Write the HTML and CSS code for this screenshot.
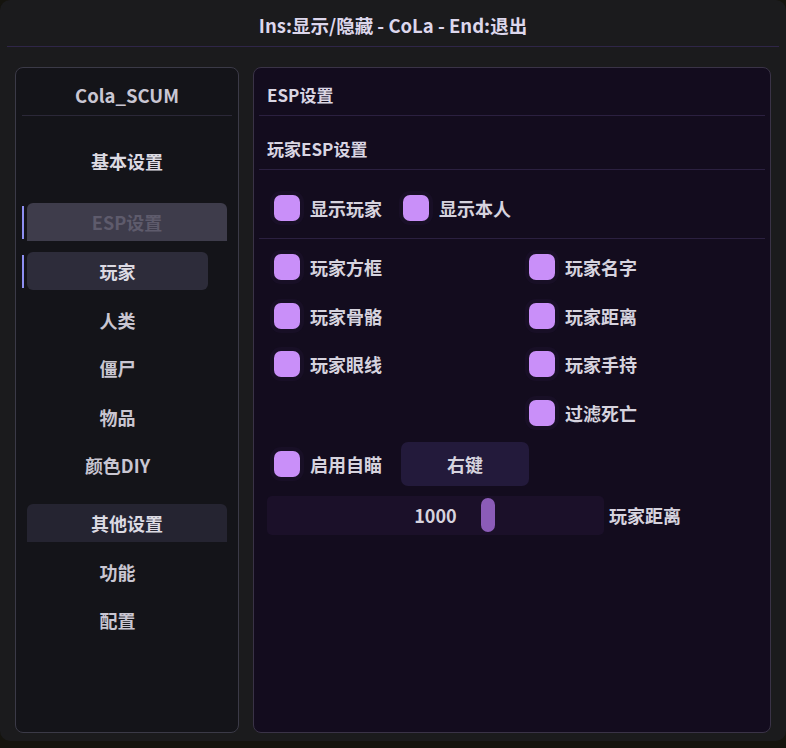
FILE: index.html
```html
<!DOCTYPE html>
<html lang="zh-CN">
<head>
    <meta charset="UTF-8">
    <meta name="viewport" content="width=device-width, initial-scale=1.0">
    <title>CoLa</title>
    <link rel="stylesheet" href="styles.css">
</head>
<body>
<div class="window">
    <div class="titlebar">Ins:显示/隐藏 - CoLa - End:退出</div>

    <div class="main">
        <div class="sidebar">
            <div class="side-title">Cola_SCUM</div>
            <div class="nav">
                <div class="nav-head">基本设置</div>
                <div class="nav-head active-group marked">ESP设置</div>
                <div class="nav-sub selected marked">玩家</div>
                <div class="nav-sub">人类</div>
                <div class="nav-sub">僵尸</div>
                <div class="nav-sub">物品</div>
                <div class="nav-sub">颜色DIY</div>
                <div class="nav-head group">其他设置</div>
                <div class="nav-sub">功能</div>
                <div class="nav-sub">配置</div>
            </div>
        </div>

        <div class="content">
            <div class="sec-title">ESP设置</div>
            <div class="sub-title">玩家ESP设置</div>

            <div class="top-row">
                <label class="check"><span class="box"></span>显示玩家</label>
                <label class="check"><span class="box"></span>显示本人</label>
            </div>

            <div class="options">
                <label class="check"><span class="box"></span>玩家方框</label>
                <label class="check"><span class="box"></span>玩家名字</label>
                <label class="check"><span class="box"></span>玩家骨骼</label>
                <label class="check"><span class="box"></span>玩家距离</label>
                <label class="check"><span class="box"></span>玩家眼线</label>
                <label class="check"><span class="box"></span>玩家手持</label>
                <div></div>
                <label class="check"><span class="box"></span>过滤死亡</label>
                <div class="aim-row">
                    <label class="check"><span class="box"></span>启用自瞄</label>
                    <button class="key-btn">右键</button>
                </div>
            </div>

            <div class="slider-row">
                <div class="slider">
                    <span class="slider-value">1000</span>
                    <span class="slider-grab"></span>
                </div>
                <span class="slider-label">玩家距离</span>
            </div>
        </div>
    </div>
</div>
</body>
</html>
```

FILE: styles.css
```css
body {
    margin: 0;
    background: #15140e;
    font-family: "Noto Sans CJK SC", "Noto Sans", sans-serif;
    font-weight: 700;
    font-size: 18px;
    color: #d6d3de;
}

.window {
    width: 786px;
    height: 741px;
    box-sizing: border-box;
    background: #1b1b1d;
    border-radius: 10px;
    padding: 0 7px;
    display: flex;
    flex-direction: column;
}

.titlebar {
    height: 46px;
    line-height: 50px;
    text-align: center;
    color: #ddd7ec;
    font-size: 18.5px;
    border-bottom: 1px solid #2f2648;
}

.main {
    display: flex;
    gap: 14px;
    padding: 20px 8px 0 8px;
    height: 666px;
}

/* left menu */
.sidebar {
    width: 224px;
    box-sizing: border-box;
    background: #141419;
    border: 1px solid #3b3a47;
    border-radius: 8px;
    padding: 0 6px;
}
.side-title {
    height: 40px;
    line-height: 40px;
    padding-top: 7px;
    text-align: center;
    color: #c9c6d3;
    font-size: 18.5px;
    border-bottom: 1px solid #2b2838;
}
.nav { padding: 26px 0 0 5px; }
.nav-head, .nav-sub {
    position: relative;
    height: 38px;
    line-height: 38px;
    margin-bottom: 10.5px;
    text-align: center;
    border-radius: 6px;
    color: #c9c6d1;
}
.nav-head { width: 200px; color: #dcdae2; }
.nav-sub { width: 181px; }
.nav-head.active-group {
    margin-top: 23px;
    margin-bottom: 11px;
    background: #3e3c4b;
    color: #5e5b6c;
    border-radius: 6px 6px 0 0;
}
.nav-head.group {
    background: #252431;
    border-radius: 6px 6px 0 0;
    margin-top: 20px;
}
.nav-sub.selected { background: #2d2c3a; color: #dcdae2; }
.marked::before {
    content: "";
    position: absolute;
    left: -5px;
    top: 3px;
    bottom: 2px;
    width: 2px;
    background: #8e8ff2;
}

/* right content */
.content {
    flex: 1;
    box-sizing: border-box;
    background: #130c1e;
    border: 1px solid #3a3347;
    border-radius: 8px;
    padding: 0 5px;
}
.sec-title, .sub-title {
    padding-left: 8px;
    color: #d9d5e2;
    font-size: 17px;
    border-bottom: 1px solid #2b2040;
}
.sec-title { padding-top: 7px; height: 40px; line-height: 40px; }
.sub-title { padding-top: 12px; height: 41px; line-height: 41px; }

.check {
    display: flex;
    align-items: center;
    gap: 10px;
    height: 40px;
}
.box {
    width: 26px;
    height: 26px;
    border-radius: 7px;
    background: #c98ff9;
    box-shadow: 0 0 0 4px #180f26;
}

.top-row {
    display: flex;
    gap: 21px;
    padding: 18px 0 10px 15px;
    border-bottom: 1px solid #2b2040;
}

.options {
    display: grid;
    grid-template-columns: 255px 1fr;
    row-gap: 8.7px;
    padding: 8px 0 0 15px;
}
.aim-row {
    grid-column: 1 / 3;
    display: flex;
    align-items: center;
    gap: 19px;
    height: 44px;
}
.key-btn {
    width: 128px;
    height: 44px;
    border: none;
    border-radius: 7px;
    background: #231a3b;
    color: #d6d3de;
    font: inherit;
}

.slider-row {
    display: flex;
    align-items: center;
    gap: 5px;
    padding: 10px 0 0 8px;
}
.slider {
    position: relative;
    width: 337px;
    height: 39px;
    line-height: 39px;
    text-align: center;
    background: #1b1029;
    border-radius: 5px;
}
.slider-grab {
    position: absolute;
    left: 214px;
    top: 2px;
    width: 14px;
    height: 34px;
    border-radius: 7px;
    background: #8b5cb8;
}
```
